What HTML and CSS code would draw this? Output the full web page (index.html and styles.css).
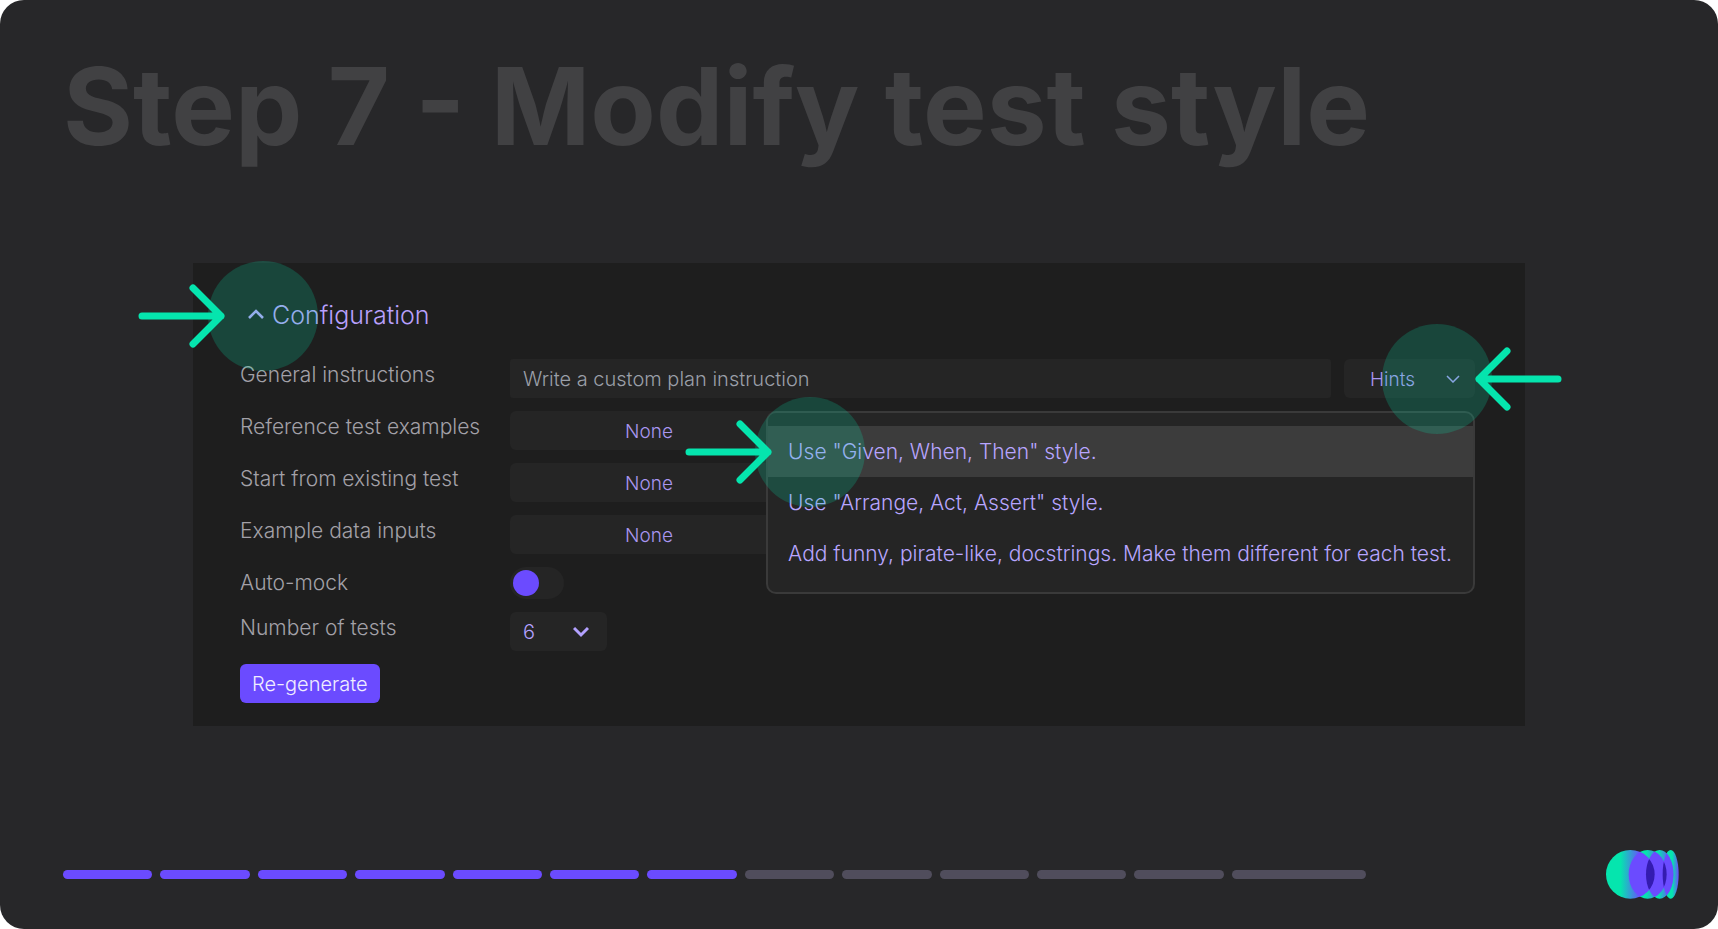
FILE: index.html
```html
<!DOCTYPE html>
<html lang="en">
<head>
<meta charset="utf-8">
<meta name="viewport" content="width=device-width, initial-scale=1">
<title>Step 7 - Modify test style</title>
<link rel="stylesheet" href="styles.css">
</head>
<body>
<svg class="defs" width="0" height="0" aria-hidden="true">
  <symbol id="arrow" viewBox="0 0 88 64">
    <path d="M4 32H83M55 4L83 32L55 60" fill="none" stroke="#05e5ae" stroke-width="7" stroke-linecap="round" stroke-linejoin="round"/>
  </symbol>
</svg>
<main class="slide">
  <h1 class="title">Step 7 - Modify test style</h1>

  <section class="panel">
    <h2 class="panel-heading">
      <button class="toggle-section" type="button" aria-expanded="true">
        <svg class="caret" viewBox="0 0 16 12" aria-hidden="true"><path d="M1 9L8 2L15 9" fill="none" stroke="currentColor" stroke-width="2.6"/></svg>
        Configuration
      </button>
      <span class="callout callout-heading" aria-hidden="true"><svg class="arrow"><use href="#arrow"/></svg></span>
    </h2>

    <form class="form">
      <label class="label" for="general">General instructions</label>
      <div class="instruction">
        <input class="field" id="general" type="text" placeholder="Write a custom plan instruction">
        <div class="hints">
          <button class="hints-button" type="button" aria-haspopup="menu" aria-expanded="true">
            Hints
            <svg class="hints-caret" viewBox="0 0 14 8" aria-hidden="true"><path d="M1 1L7 7L13 1" fill="none" stroke="currentColor" stroke-width="1.5"/></svg>
          </button>
          <div class="menu" role="menu">
            <button class="menu-item active" type="button" role="menuitem">Use "Given, When, Then" style.
              <span class="callout callout-item" aria-hidden="true"><svg class="arrow"><use href="#arrow"/></svg></span>
            </button>
            <button class="menu-item" type="button" role="menuitem">Use "Arrange, Act, Assert" style.</button>
            <button class="menu-item" type="button" role="menuitem">Add funny, pirate-like, docstrings. Make them different for each test.</button>
          </div>
          <span class="callout callout-hints" aria-hidden="true"><svg class="arrow"><use href="#arrow"/></svg></span>
        </div>
      </div>

      <label class="label" for="examples">Reference test examples</label>
      <button class="picker" id="examples" type="button">None</button>

      <label class="label" for="existing">Start from existing test</label>
      <button class="picker" id="existing" type="button">None</button>

      <label class="label" for="inputs">Example data inputs</label>
      <button class="picker" id="inputs" type="button">None</button>

      <label class="label" for="mock">Auto-mock</label>
      <input class="switch" id="mock" type="checkbox" role="switch">

      <label class="label" for="count">Number of tests</label>
      <div class="count">
        <select class="count-select" id="count"><option>6</option></select>
        <svg class="caret count-caret" viewBox="0 0 16 12" aria-hidden="true"><path d="M1 2L8 9L15 2" fill="none" stroke="currentColor" stroke-width="3"/></svg>
      </div>

      <button class="submit" type="button">Re-generate</button>
    </form>
  </section>

  <footer class="footer">
    <div class="progress" role="progressbar" aria-label="Step" aria-valuemin="0" aria-valuemax="13" aria-valuenow="7">
      <span class="step done"></span><span class="step done"></span><span class="step done"></span><span class="step done"></span><span class="step done"></span><span class="step done"></span><span class="step done"></span><span class="step"></span><span class="step"></span><span class="step"></span><span class="step"></span><span class="step"></span><span class="step"></span>
    </div>
    <svg class="logo" viewBox="0 0 219 147" role="img" aria-label="Logo">
      <defs>
        <linearGradient id="g1"><stop offset=".3" stop-color="#05e5ae"/><stop offset=".72" stop-color="#6b4bff"/></linearGradient>
        <linearGradient id="g2"><stop offset=".45" stop-color="#05e5ae"/><stop offset=".9" stop-color="#6b4bff"/></linearGradient>
        <linearGradient id="g4"><stop offset=".6" stop-color="#05e5ae"/><stop offset="1" stop-color="#6b4bff"/></linearGradient>
        <clipPath id="c1"><circle cx="73" cy="73" r="73"/></clipPath>
        <clipPath id="c2"><ellipse cx="125" cy="73" rx="57" ry="73"/></clipPath>
        <clipPath id="c3"><ellipse cx="161" cy="73" rx="41" ry="73"/></clipPath>
      </defs>
      <ellipse cx="194" cy="73" rx="24" ry="73" fill="url(#g4)"/>
      <ellipse cx="161" cy="73" rx="41" ry="73" fill="url(#g2)"/>
      <ellipse cx="125" cy="73" rx="57" ry="73" fill="url(#g2)"/>
      <circle cx="73" cy="73" r="73" fill="url(#g1)"/>
      <g fill="#6b4bff">
        <ellipse cx="125" cy="73" rx="57" ry="73" clip-path="url(#c1)"/>
        <ellipse cx="161" cy="73" rx="41" ry="73" clip-path="url(#c2)"/>
        <ellipse cx="194" cy="73" rx="24" ry="73" clip-path="url(#c3)"/>
      </g>
      <g fill="#341bb0">
        <ellipse cx="161" cy="73" rx="41" ry="73" clip-path="url(#c1)"/>
        <ellipse cx="194" cy="73" rx="24" ry="73" clip-path="url(#c2)"/>
      </g>
    </svg>
  </footer>
</main>
</body>
</html>
```
FILE: styles.css
```css
* { box-sizing: border-box; }

body {
  margin: 0;
  background: #fff;
  font-family: Inter, "Liberation Sans", sans-serif;
  font-size: 21px;
  font-weight: 300;
}

button, input, select {
  margin: 0;
  border: 0;
  font: inherit;
}

.defs { position: absolute; }

.slide {
  display: flex;
  flex-direction: column;
  min-height: 100vh;
  padding: 41px 39px 30px 63px;
  border-radius: 24px;
  background: #272729;
}

.title {
  margin: 0;
  color: #414143;
  font-size: 107px;
  font-weight: 700;
  line-height: 130px;
}

.panel {
  margin: 92px 154px 0 130px;
  padding: 36px 50px 23px 47px;
  background: #1e1e1e;
}

.panel-heading {
  position: relative;
  margin: 0 0 28px;
  font-size: 25px;
  font-weight: 300;
  line-height: 32px;
}

.toggle-section {
  display: flex;
  align-items: center;
  gap: 8px;
  padding: 0 0 0 8px;
  background: none;
  color: #b8a0fc;
}

.caret {
  width: 16px;
  height: 12px;
}

.form {
  display: grid;
  grid-template-columns: 270px 1fr;
  row-gap: 13px;
  align-items: start;
  justify-items: start;
}

.label {
  color: #a3a1a8;
  line-height: 32px;
}

.instruction {
  display: flex;
  gap: 13px;
  width: 100%;
}

.field {
  flex: 1;
  min-width: 0;
  height: 39px;
  padding: 1px 13px 0;
  border-radius: 3px;
  background: #252525;
  color: #b3a1ff;
  font-size: 20px;
}

.field::placeholder {
  color: #9a9fa8;
  opacity: 1;
}

.hints { position: relative; }

.hints-button {
  display: flex;
  align-items: center;
  justify-content: space-between;
  width: 131px;
  height: 39px;
  padding: 1px 15px 0 26px;
  border-radius: 6px;
  background: #252525;
  color: #a996f0;
  font-size: 19px;
}

.hints-caret {
  width: 14px;
  height: 8px;
}

.menu {
  position: absolute;
  top: 52px;
  right: 0;
  z-index: 1;
  padding: 13px 0;
  border: 2px solid #3a3a3a;
  border-radius: 10px;
  background: #252525;
}

.menu-item {
  position: relative;
  display: block;
  width: 100%;
  padding: 0 21px 0 20px;
  background: none;
  color: #b8a5ff;
  line-height: 51px;
  text-align: left;
  white-space: nowrap;
}

.menu-item.active { background: #3c3c3c; }

.picker {
  width: 278px;
  height: 39px;
  padding: 1px 0 0;
  border-radius: 6px;
  background: #252525;
  color: #a996f0;
  font-size: 19px;
}

.switch {
  appearance: none;
  display: flex;
  align-items: center;
  width: 54px;
  height: 32px;
  padding: 3px;
  border-radius: 16px;
  background: #252525;
}

.switch::before {
  content: "";
  width: 26px;
  height: 26px;
  border-radius: 50%;
  background: #6b4bff;
}

.count {
  display: grid;
  align-items: center;
  justify-items: end;
}

.count > * { grid-area: 1 / 1; }

.count-select {
  appearance: none;
  width: 97px;
  height: 39px;
  padding: 0 13px;
  border-radius: 6px;
  background: #252525;
  color: #b3a1ff;
  font-size: 20px;
}

.count-caret {
  margin-right: 18px;
  color: #b3a1ff;
  pointer-events: none;
}

.submit {
  height: 39px;
  padding: 0 12px;
  border-radius: 6px;
  background: #6b4bff;
  color: #f0edff;
  font-size: 20px;
}

.callout {
  position: absolute;
  z-index: 2;
  width: 110px;
  height: 110px;
  border-radius: 50%;
  background: rgba(5, 229, 174, .2);
  pointer-events: none;
}

.arrow {
  position: absolute;
  top: 23px;
  right: 92px;
  width: 88px;
  height: 64px;
}

.callout-heading { top: -38px; left: -32px; }
.callout-item { top: -29px; left: -13px; }
.callout-hints { top: -35px; right: -17px; transform: scaleX(-1); }

.footer {
  display: flex;
  align-items: center;
  justify-content: space-between;
  margin-top: auto;
}

.progress {
  display: grid;
  flex: 1;
  grid-template-columns: repeat(12, 2fr) 3fr;
  gap: 8px;
  margin-right: 240px;
}

.step {
  height: 9px;
  border-radius: 5px;
  background: #504d5c;
}

.step.done { background: #6b4bff; }

.logo {
  width: 73px;
  height: 49px;
}
```
